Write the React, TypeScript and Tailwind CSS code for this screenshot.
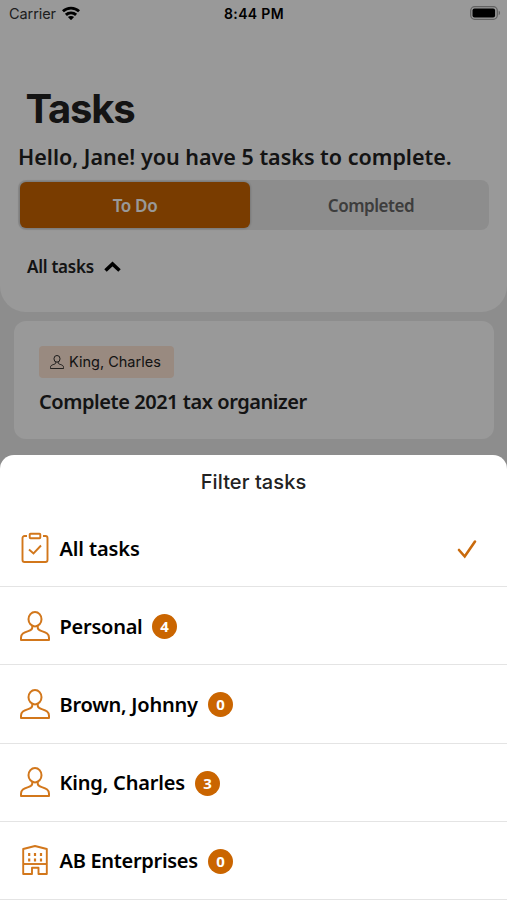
import { useState } from "react";
import clsx from "clsx";

// ============================================================
// Tasks screen with the "Filter tasks" bottom sheet open.
// The page itself lies under a 40% black backdrop.
// ============================================================

type IconKind = "clipboard" | "person" | "building";

type Filter = {
  label: string;
  icon: IconKind;
  count?: number;
  labelClass: string;
};

const FILTERS: Filter[] = [
  { label: "All tasks", icon: "clipboard", labelClass: "w-[81px] tracking-[-0.120px]" },
  { label: "Personal", icon: "person", count: 4, labelClass: "w-[83px] tracking-[-0.250px]" },
  { label: "Brown, Johnny", icon: "person", count: 0, labelClass: "w-[139px] tracking-[-0.240px]" },
  { label: "King, Charles", icon: "person", count: 3, labelClass: "w-[126px] tracking-[-0.180px]" },
  { label: "AB Enterprises", icon: "building", count: 0, labelClass: "w-[139px] tracking-[-0.300px]" },
];

function PersonIcon({ className, strokeWidth = 2 }: { className?: string; strokeWidth?: number }) {
  return (
    <svg viewBox="0 0 30 30" fill="none" stroke="currentColor" strokeWidth={strokeWidth} strokeLinejoin="round" className={className}>
      <ellipse cx="15" cy="8.200" rx="6.500" ry="7.200" />
      <path d="M12.300 14.800v1.700c0 2-1.300 2.700-4.100 3.600C3.600 21.600 1 22.800 1 26.700V29h28v-2.300c0-3.900-2.600-5.100-7.200-6.600-2.800-.9-4.100-1.600-4.100-3.600v-1.700" />
    </svg>
  );
}

function ClipboardIcon() {
  return (
    <svg viewBox="0 0 30 32" fill="none" stroke="currentColor" strokeWidth="1.900" className="h-8 w-[30px]">
      <path d="M7 4H4.500A2 2 0 0 0 2.500 6v22a2 2 0 0 0 2 2h21a2 2 0 0 0 2-2V6a2 2 0 0 0-2-2H23" />
      <rect x="9.700" y="1.700" width="10.600" height="4.500" rx=".8" />
      <path d="M9 17.500l4.500 4 7.500-8" />
    </svg>
  );
}

function BuildingIcon() {
  return (
    <svg viewBox="0 0 30 32" fill="none" stroke="currentColor" strokeWidth="1.900" strokeLinejoin="round" className="h-8 w-[30px]">
      <path d="M3.200 5L15 2l11.800 3v25h-8.300v-6.200h-6.500V30H3.200z" />
      <path d="M3.200 20h23.600" />
      <path d="M9.200 9v3M15 9v3M21 9v3M9.200 14.500v3M15 14.500v3M21 14.500v3" strokeWidth="2.200" />
    </svg>
  );
}

function FilterIcon({ kind }: { kind: IconKind }) {
  if (kind === "clipboard") return <ClipboardIcon />;
  if (kind === "building") return <BuildingIcon />;
  return <PersonIcon className="size-[30px]" />;
}

function StatusBar() {
  return (
    <div className="grid h-7 grid-cols-3 items-center pl-[9px] pr-[6px] font-[Inter,sans-serif] text-[14.500px] leading-none text-black">
      <div className="flex items-center gap-[6px]">
        <span className="text-[#333] tracking-[-0.080px]">Carrier</span>
        <svg viewBox="0 0 18 14" className="mb-[2px] h-[14px] w-[18px]" fill="none" stroke="currentColor" strokeWidth="2.900">
          <path d="M.9 5.300c4.500-4.300 11.700-4.300 16.200 0" />
          <path d="M3.900 8.900c2.800-2.700 7.400-2.700 10.200 0" />
          <path d="M9 14.200l-3.100-3.200c1.600-1.400 4.600-1.400 6.200 0z" fill="currentColor" stroke="none" />
        </svg>
      </div>
      <span className="-ml-[2px] text-center text-[14px] font-semibold tracking-[0.350px]">8:44 PM</span>
      <svg viewBox="0 0 31 14" className="mb-[2px] h-[14px] w-[31px] justify-self-end">
        <rect x=".7" y=".7" width="26.600" height="12.600" rx="4" fill="none" stroke="#a3a3a3" strokeWidth="1.300" />
        <rect x="2.500" y="2.500" width="22.600" height="9" rx="2" />
        <path d="M28.700 4.800c1.800.6 1.800 3.800 0 4.400z" fill="#a3a3a3" />
      </svg>
    </div>
  );
}

export default function App() {
  const [selected, setSelected] = useState("All tasks");

  return (
    <div className="relative flex h-[900px] w-[507px] flex-col overflow-hidden bg-[#ececec] font-['Noto_Sans',sans-serif] text-[#222]">
      <header className="h-[312px] shrink-0 rounded-b-[26px] bg-white">
        <StatusBar />
        <h1 className="ml-[25.500px] mt-[56px] font-[Inter,sans-serif] text-[40px] font-bold leading-[50px] tracking-[-1.200px]">Tasks</h1>
        <p className="ml-[18px] mt-[9px] whitespace-nowrap text-[21.500px] font-semibold leading-7">
          Hello, Jane! you have 5 tasks to complete.
        </p>
        <div className="ml-[18px] mt-[9px] flex h-[50px] w-[471px] rounded-lg bg-[#ececec] p-[2px] text-[17px] font-semibold">
          <button type="button" className="w-[230px] rounded-md bg-[#ca6500] pt-px tracking-[-0.350px] text-white shadow-[0_0_3px_rgba(0,0,0,0.300)]">
            To Do
          </button>
          <button type="button" className="flex-1 pl-[5px] pt-px tracking-[-0.450px] text-[#666]">Completed</button>
        </div>
        <button type="button" className="ml-[27px] mt-[25px] flex items-center text-[17px] font-semibold leading-6">
          <span className="w-[77px] text-left tracking-[-0.250px]">All tasks</span>
          <svg viewBox="0 0 17 12" className="h-3 w-[17px]" fill="none" stroke="#000" strokeWidth="3.600">
            <path d="M1.500 9.500l7-6.500 7 6.500" />
          </svg>
        </button>
      </header>

      <article className="ml-[14px] mt-[9px] flex h-[118px] w-[480px] shrink-0 flex-col items-start rounded-xl bg-white pl-[25px] pt-[25px]">
        <div className="flex h-8 w-[135px] items-center gap-[5px] rounded bg-[#ffe6d5] pl-[11px]">
          <PersonIcon className="size-[14px] shrink-0" strokeWidth={2} />
          <span className="whitespace-nowrap font-[Inter,sans-serif] text-[14.500px]">King, Charles</span>
        </div>
        <h2 className="mt-[10px] whitespace-nowrap text-[20px] font-semibold leading-7 tracking-[-0.450px]">Complete 2021 tax organizer</h2>
      </article>

      <div className="absolute inset-0 bg-black/40" />

      <section className="absolute inset-x-0 bottom-0 flex h-[445px] flex-col rounded-t-[14px] bg-white">
        <h3 className="pt-[13px] text-center font-[Inter,sans-serif] text-[20px] font-medium leading-7 tracking-[0.080px]">Filter tasks</h3>
        <ul className="mt-[13px] text-black">
          {FILTERS.map(({ label, icon, count, labelClass }) => (
            <li key={label} className="h-[78.200px] border-b border-[#e4e4e4]">
              <button type="button" onClick={() => setSelected(label)} className="flex size-full items-center pl-[20px] pr-[30px] pt-[2px]">
                <span className="flex w-[30px] shrink-0 justify-center pb-[2px] text-[#d2771b]">
                  <FilterIcon kind={icon} />
                </span>
                <span className={clsx("ml-[9.500px] whitespace-nowrap text-left text-[20px] font-semibold leading-7", labelClass)}>{label}</span>
                {count !== undefined && (
                  <span className="ml-[9.500px] flex size-[25px] shrink-0 items-center justify-center rounded-full bg-[#ca6500] text-[15px] font-bold leading-none text-white">
                    {count}
                  </span>
                )}
                {selected === label && (
                  <svg viewBox="0 0 20 20" className="ml-auto size-5" fill="none" stroke="#c96a0c" strokeWidth="2.600" strokeLinecap="round">
                    <path d="M2 11l5.700 6.500L18 2.500" />
                  </svg>
                )}
              </button>
            </li>
          ))}
        </ul>
      </section>
    </div>
  );
}
